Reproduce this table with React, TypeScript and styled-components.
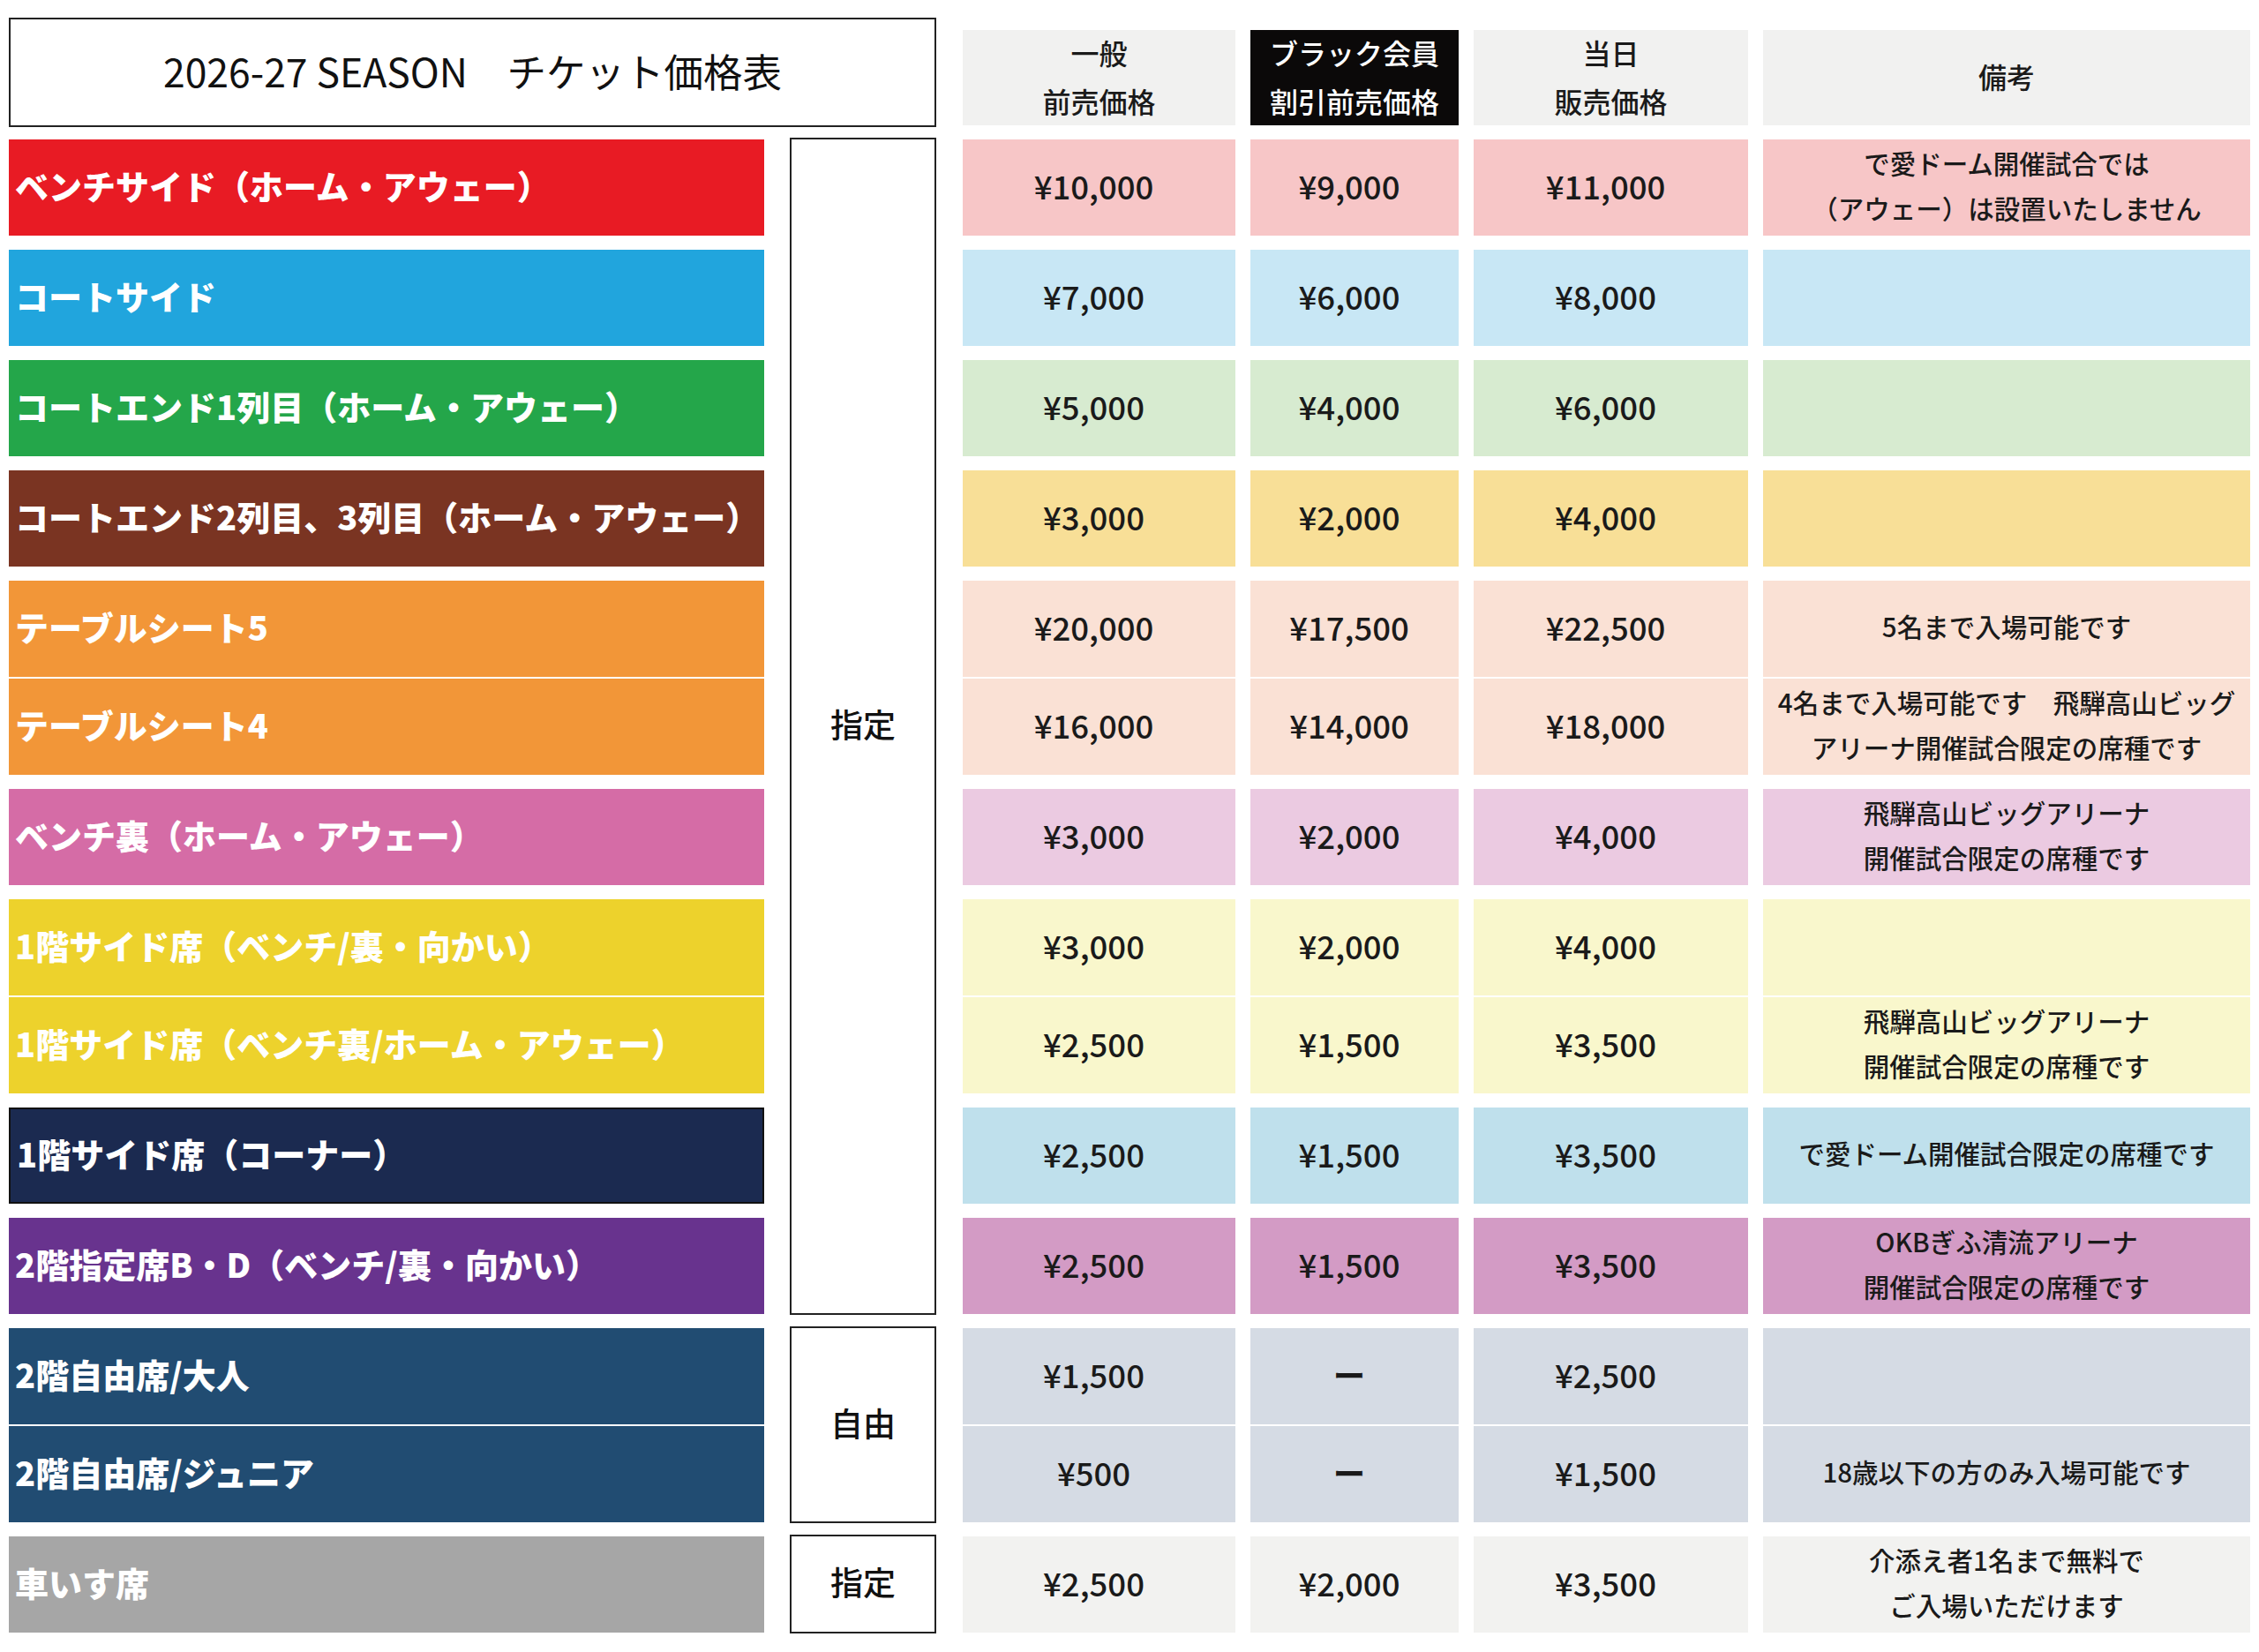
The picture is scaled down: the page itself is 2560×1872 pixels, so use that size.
import React from "react";
import styled, { createGlobalStyle } from "styled-components";

type Seat = {
  label: string;
  prices: string[];
  note?: string[];
};

type Group = {
  color: string;
  bg: string;
  outlined?: boolean;
  seats: Seat[];
};

const groups: Group[] = [
  {
    color: "#e81b24",
    bg: "#f7c6c7",
    seats: [
      {
        label: "ベンチサイド（ホーム・アウェー）",
        prices: ["¥10,000", "¥9,000", "¥11,000"],
        note: ["で愛ドーム開催試合では", "（アウェー）は設置いたしません"],
      },
    ],
  },
  {
    color: "#21a5dd",
    bg: "#c8e7f5",
    seats: [{ label: "コートサイド", prices: ["¥7,000", "¥6,000", "¥8,000"] }],
  },
  {
    color: "#24a64a",
    bg: "#d7ebd0",
    seats: [
      { label: "コートエンド1列目（ホーム・アウェー）", prices: ["¥5,000", "¥4,000", "¥6,000"] },
    ],
  },
  {
    color: "#7a3422",
    bg: "#f8df97",
    seats: [
      {
        label: "コートエンド2列目、3列目（ホーム・アウェー）",
        prices: ["¥3,000", "¥2,000", "¥4,000"],
      },
    ],
  },
  {
    color: "#f29638",
    bg: "#fae1d5",
    seats: [
      {
        label: "テーブルシート5",
        prices: ["¥20,000", "¥17,500", "¥22,500"],
        note: ["5名まで入場可能です"],
      },
      {
        label: "テーブルシート4",
        prices: ["¥16,000", "¥14,000", "¥18,000"],
        note: ["4名まで入場可能です　飛騨高山ビッグ", "アリーナ開催試合限定の席種です"],
      },
    ],
  },
  {
    color: "#d56ca6",
    bg: "#ebcae1",
    seats: [
      {
        label: "ベンチ裏（ホーム・アウェー）",
        prices: ["¥3,000", "¥2,000", "¥4,000"],
        note: ["飛騨高山ビッグアリーナ", "開催試合限定の席種です"],
      },
    ],
  },
  {
    color: "#edd22c",
    bg: "#f9f7cc",
    seats: [
      { label: "1階サイド席（ベンチ/裏・向かい）", prices: ["¥3,000", "¥2,000", "¥4,000"] },
      {
        label: "1階サイド席（ベンチ裏/ホーム・アウェー）",
        prices: ["¥2,500", "¥1,500", "¥3,500"],
        note: ["飛騨高山ビッグアリーナ", "開催試合限定の席種です"],
      },
    ],
  },
  {
    color: "#1b2a50",
    bg: "#bfe0ec",
    outlined: true,
    seats: [
      {
        label: "1階サイド席（コーナー）",
        prices: ["¥2,500", "¥1,500", "¥3,500"],
        note: ["で愛ドーム開催試合限定の席種です"],
      },
    ],
  },
  {
    color: "#68338e",
    bg: "#d39bc5",
    seats: [
      {
        label: "2階指定席B・D（ベンチ/裏・向かい）",
        prices: ["¥2,500", "¥1,500", "¥3,500"],
        note: ["OKBぎふ清流アリーナ", "開催試合限定の席種です"],
      },
    ],
  },
  {
    color: "#214c72",
    bg: "#d5dbe4",
    seats: [
      { label: "2階自由席/大人", prices: ["¥1,500", "ー", "¥2,500"] },
      {
        label: "2階自由席/ジュニア",
        prices: ["¥500", "ー", "¥1,500"],
        note: ["18歳以下の方のみ入場可能です"],
      },
    ],
  },
  {
    color: "#a6a6a6",
    bg: "#f2f2f0",
    seats: [
      {
        label: "車いす席",
        prices: ["¥2,500", "¥2,000", "¥3,500"],
        note: ["介添え者1名まで無料で", "ご入場いただけます"],
      },
    ],
  },
];

const kinds = [
  { label: "指定", rows: "2 / span 9" },
  { label: "自由", rows: "11" },
  { label: "指定", rows: "12" },
];

const priceCols = ["p0", "p1", "p2"];

const GlobalStyle = createGlobalStyle`
  html, body {
    margin: 0;
    padding: 0;
    background: #fff;
  }
  body {
    font-family: "Noto Sans CJK JP", "Noto Sans", sans-serif;
    color: #1a1a1a;
  }
`;

const Sheet = styled.div`
  display: grid;
  grid-template-columns:
    [label] 856px 29px [kind] 166px 30px [p0] 309px 17px [p1] 236px 17px
    [p2] 311px 17px [note] 552px;
  grid-template-rows: 122px;
  grid-auto-rows: auto;
  row-gap: 16px;
  padding: 20px 0 20px 10px;
  width: max-content;
`;

const Title = styled.div`
  grid-column: label / span 3;
  grid-row: 1;
  box-sizing: border-box;
  height: 124px;
  padding-bottom: 6px;
  border: 2px solid #222;
  display: flex;
  align-items: center;
  justify-content: center;
  font-size: 44.5px;
  font-weight: 400;
  color: #111;
  white-space: pre;
`;

const HeadCell = styled.div<{ $col: string; $dark?: boolean }>`
  grid-column: ${(p) => p.$col};
  grid-row: 1;
  align-self: end;
  box-sizing: border-box;
  height: 108px;
  padding-bottom: 3px;
  display: flex;
  flex-direction: column;
  align-items: center;
  justify-content: center;
  background: ${(p) => (p.$dark ? "#0b0909" : "#f1f1f0")};
  color: ${(p) => (p.$dark ? "#fff" : "#1a1a1a")};
  font-size: 32px;
  font-weight: 500;
  line-height: 55px;
`;

const Stack = styled.div<{ $col: string; $row: number }>`
  grid-column: ${(p) => p.$col};
  grid-row: ${(p) => p.$row};
  display: flex;
  flex-direction: column;
  gap: 2px;
`;

const LabelBar = styled.div<{ $color: string; $outlined?: boolean }>`
  box-sizing: border-box;
  height: 109px;
  display: flex;
  align-items: center;
  padding: 0 0 6px 7px;
  background: ${(p) => p.$color};
  border: ${(p) => (p.$outlined ? "2px solid #111" : "none")};
  color: #fff;
  font-size: 38px;
  font-weight: 900;
  white-space: nowrap;
`;

const PriceCell = styled.div<{ $bg: string; $bold?: boolean }>`
  box-sizing: border-box;
  height: 109px;
  display: flex;
  align-items: center;
  justify-content: center;
  padding: 0 12px 5px 0;
  background: ${(p) => p.$bg};
  font-size: 36.5px;
  font-weight: ${(p) => (p.$bold ? 700 : 500)};
  color: #1a1a1a;
`;

const NoteCell = styled.div<{ $bg: string }>`
  box-sizing: border-box;
  height: 109px;
  padding-bottom: 6px;
  display: flex;
  flex-direction: column;
  align-items: center;
  justify-content: center;
  background: ${(p) => p.$bg};
  font-size: 29.5px;
  font-weight: 500;
  line-height: 51px;
  color: #1a1a1a;
  white-space: pre;
`;

const KindBox = styled.div<{ $rows: string }>`
  grid-column: kind;
  grid-row: ${(p) => p.$rows};
  box-sizing: border-box;
  margin: -2px 0 -1px;
  padding-bottom: 6px;
  border: 2px solid #222;
  display: flex;
  align-items: center;
  justify-content: center;
  font-size: 37px;
  font-weight: 500;
  color: #111;
`;

const App = () => {
  return (
    <>
      <GlobalStyle />
      <Sheet>
        <Title>2026-27 SEASON　チケット価格表</Title>
        <HeadCell $col="p0">
          <span>一般</span>
          <span>前売価格</span>
        </HeadCell>
        <HeadCell $col="p1" $dark>
          <span>ブラック会員</span>
          <span>割引前売価格</span>
        </HeadCell>
        <HeadCell $col="p2">
          <span>当日</span>
          <span>販売価格</span>
        </HeadCell>
        <HeadCell $col="note">
          <span>備考</span>
        </HeadCell>

        {kinds.map((k, i) => (
          <KindBox key={i} $rows={k.rows}>
            {k.label}
          </KindBox>
        ))}

        {groups.map((g, gi) => {
          const row = gi + 2;
          return (
            <React.Fragment key={gi}>
              <Stack $col="label" $row={row}>
                {g.seats.map((s) => (
                  <LabelBar key={s.label} $color={g.color} $outlined={g.outlined}>
                    {s.label}
                  </LabelBar>
                ))}
              </Stack>
              {priceCols.map((col, ci) => (
                <Stack key={col} $col={col} $row={row}>
                  {g.seats.map((s) => (
                    <PriceCell key={s.label} $bg={g.bg} $bold={s.prices[ci] === "ー"}>
                      {s.prices[ci]}
                    </PriceCell>
                  ))}
                </Stack>
              ))}
              <Stack $col="note" $row={row}>
                {g.seats.map((s) => (
                  <NoteCell key={s.label} $bg={g.bg}>
                    {(s.note ?? []).map((line) => (
                      <span key={line}>{line}</span>
                    ))}
                  </NoteCell>
                ))}
              </Stack>
            </React.Fragment>
          );
        })}
      </Sheet>
    </>
  );
};

export default App;
